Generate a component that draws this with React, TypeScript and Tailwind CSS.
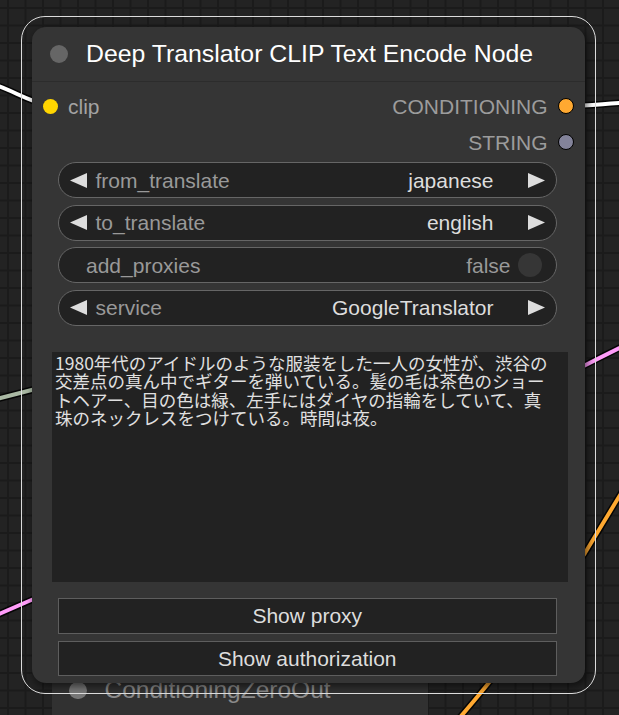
import React from 'react';

const wires = [
  { d: 'M -20 82 C 5 84, 22 100, 50 106', c: '#ffffff' },
  { d: 'M 566 106 C 595 106, 605 103, 640 102', c: '#ffffff' },
  { d: 'M -20 403 C 10 396, 30 390, 60 383', c: '#a9b8a3' },
  { d: 'M -20 622 C 5 612, 30 600, 60 588', c: '#ff9cf9' },
  { d: 'M 560 378 C 580 368, 600 357, 640 338', c: '#ff9cf9' },
  { d: 'M 435 745 Q 500 676 585 553 L 640 462', c: '#ffa931' },
];

const promptLines = [
  '1980年代のアイドルのような服装をした一人の女性が、渋谷の',
  '交差点の真ん中でギターを弾いている。髪の毛は茶色のショー',
  'トヘアー、目の色は緑、左手にはダイヤの指輪をしていて、真',
  '珠のネックレスをつけている。時間は夜。',
];

function Arrow({ dir }: { dir: 'left' | 'right' }) {
  return (
    <svg width="17" height="15" viewBox="0 0 17 15" className="shrink-0">
      <polygon points={dir === 'left' ? '0,7.5 17,0 17,15' : '0,0 17,7.5 0,15'} fill="#dddddd" />
    </svg>
  );
}

function ComboWidget({ label, value }: { label: string; value: string }) {
  return (
    <div className="flex h-[36px] items-center rounded-full border border-[#666] bg-[#222] pl-[11px] pr-[10.5px]">
      <Arrow dir="left" />
      <span className="ml-[8.5px] text-[#999]">{label}</span>
      <span className="ml-auto text-[#ddd]">{value}</span>
      <span className="ml-[34.5px] flex">
        <Arrow dir="right" />
      </span>
    </div>
  );
}

function ToggleWidget({ label, value }: { label: string; value: boolean }) {
  return (
    <div className="flex h-[36px] items-center rounded-full border border-[#666] bg-[#222] pl-[27px] pr-[14px]">
      <span className="text-[#999]">{label}</span>
      <span className="ml-auto text-[#999]">{value ? 'true' : 'false'}</span>
      <span className="ml-[7px] h-[24px] w-[24px] rounded-full bg-[#363636]" />
    </div>
  );
}

export default function App() {
  return (
    <div className="relative h-[715px] w-[619px] overflow-hidden bg-[#232323] bg-[linear-gradient(#1b1b1b_2px,transparent_2px),linear-gradient(90deg,#1b1b1b_2px,transparent_2px)] bg-[size:17.5px_17.5px] bg-[position:7px_7px] font-['Liberation_Sans',Arial,sans-serif] text-[21px] leading-none">
      {/* links */}
      <svg className="absolute inset-0" width="619" height="715">
        {wires.map((w, i) => (
          <g key={i} fill="none" strokeLinecap="round">
            <path d={w.d} stroke="#000" strokeOpacity="0.85" strokeWidth="7" />
            <path d={w.d} stroke={w.c} strokeWidth="4" />
          </g>
        ))}
      </svg>

      {/* node behind */}
      <div className="absolute left-[52px] top-[664px] h-[120px] w-[376px] rounded-[14px] bg-[#313131]">
        <div className="flex h-[53px] items-center pl-[17px]">
          <span className="h-[17.5px] w-[17.5px] rounded-full bg-[#777]" />
          <span className="ml-[18px] text-[24.5px] text-[#8a8a8a]">ConditioningZeroOut</span>
        </div>
      </div>

      {/* selected node */}
      <div className="absolute left-[32px] top-[27px] flex h-[656px] w-[553px] flex-col rounded-[14px] bg-[#353535] shadow-[2px_3px_8px_rgba(0,0,0,0.6)]">
        <div className="flex h-[54px] items-center pl-[18px]">
          <span className="h-[17.5px] w-[17.5px] rounded-full bg-[#666]" />
          <span className="ml-[18.5px] text-[24.8px] text-white">Deep Translator CLIP Text Encode Node</span>
        </div>
        <div className="h-px bg-[#2c2c2c]" />

        {/* slots */}
        <div className="pt-[6px]">
          <div className="flex h-[36px] items-center pl-[10.5px] pr-[11.5px]">
            <span className="h-[15px] w-[15px] rounded-full bg-[#ffd500]" />
            <span className="ml-[10.5px] text-[#a3a3a3]">clip</span>
            <span className="ml-auto text-[#9c9c9c]">CONDITIONING</span>
            <span className="ml-[10.5px] h-[15.5px] w-[15.5px] rounded-full border-[1.5px] border-black bg-[#ffa931]" />
          </div>
          <div className="flex h-[36px] items-center justify-end pr-[11.5px]">
            <span className="text-[#9c9c9c]">STRING</span>
            <span className="ml-[10.5px] h-[15.5px] w-[15.5px] rounded-full border-[1.5px] border-black bg-[#83839a]" />
          </div>
        </div>

        {/* widgets */}
        <div className="ml-[26px] mt-[2px] flex w-[498.5px] flex-col gap-[6.5px]">
          <ComboWidget label="from_translate" value="japanese" />
          <ComboWidget label="to_translate" value="english" />
          <ToggleWidget label="add_proxies" value={false} />
          <ComboWidget label="service" value="GoogleTranslator" />
        </div>

        {/* prompt */}
        <div className="ml-[20px] mt-[26.5px] h-[230px] w-[516px] bg-[#222] pl-[3px] pt-[2px] font-['Noto_Sans_CJK_JP',sans-serif] text-[17.5px] leading-[18.4px] text-[#e0e0e0]">
          {promptLines.map((l) => (
            <div key={l} className="whitespace-nowrap">
              {l}
            </div>
          ))}
        </div>

        {/* buttons */}
        <div className="ml-[26px] mt-[16px] flex w-[498.5px] flex-col gap-[7px]">
          <div className="flex h-[35.5px] items-center justify-center border border-[#5e5e5e] bg-[#222] text-[#ddd]">
            Show proxy
          </div>
          <div className="flex h-[35.5px] items-center justify-center border border-[#5e5e5e] bg-[#222] text-[#ddd]">
            Show authorization
          </div>
        </div>
      </div>

      {/* selection outline */}
      <div className="pointer-events-none absolute left-[21px] top-[16px] h-[678px] w-[575px] rounded-[24px] border-[1.5px] border-[#dcdcdc]" />
    </div>
  );
}
